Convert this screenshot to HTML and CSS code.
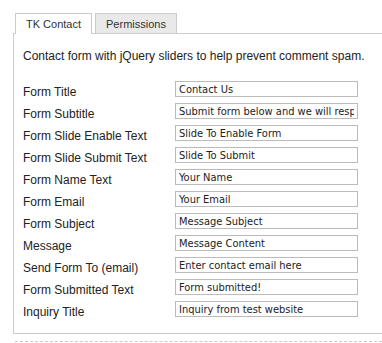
FILE: index.html
```html
<!DOCTYPE html>
<html>
  <head>
    <title>TK Contact</title>
    <link rel="stylesheet" href="styles.css">
  </head>
  <body>
    <div class="tabs">
      <div class="tab active">TK Contact</div>
      <div class="tab">Permissions</div>
    </div>
    <div class="panel">
      <p class="intro">Contact form with jQuery sliders to help prevent comment spam.</p>
      <div class="fields">
        <div class="row">
          <label for="title">Form Title</label>
          <input type="text" id="title" value="Contact Us">
        </div>
        <div class="row">
          <label for="subtitle">Form Subtitle</label>
          <input type="text" id="subtitle" value="Submit form below and we will respond shortly">
        </div>
        <div class="row">
          <label for="enable">Form Slide Enable Text</label>
          <input type="text" id="enable" value="Slide To Enable Form">
        </div>
        <div class="row">
          <label for="submit">Form Slide Submit Text</label>
          <input type="text" id="submit" value="Slide To Submit">
        </div>
        <div class="row">
          <label for="name">Form Name Text</label>
          <input type="text" id="name" value="Your Name">
        </div>
        <div class="row">
          <label for="email">Form Email</label>
          <input type="text" id="email" value="Your Email">
        </div>
        <div class="row">
          <label for="subject">Form Subject</label>
          <input type="text" id="subject" value="Message Subject">
        </div>
        <div class="row">
          <label for="message">Message</label>
          <input type="text" id="message" value="Message Content">
        </div>
        <div class="row">
          <label for="sendto">Send Form To (email)</label>
          <input type="text" id="sendto" value="Enter contact email here">
        </div>
        <div class="row">
          <label for="done">Form Submitted Text</label>
          <input type="text" id="done" value="Form submitted!">
        </div>
        <div class="row">
          <label for="inquiry">Inquiry Title</label>
          <input type="text" id="inquiry" value="Inquiry from test website">
        </div>
      </div>
    </div>
    <div class="next"></div>
  </body>
</html>
```

FILE: styles.css
```css
body {
  margin: 0;
  padding: 13px 0 0 13px;
  font-family: "Liberation Sans", Arial, sans-serif;
  font-size: 12px;
  color: #222;
  background: #fff;
  overflow: hidden;
}

.tabs {
  display: flex;
  gap: 3px;
  margin-left: 2px;
}

.tab {
  border: 1px solid #ccc;
  border-bottom: none;
  background: #e9e9e9;
  color: #333;
  font-size: 11px;
  padding: 3px 10px 0;
  height: 16px;
  line-height: 15px;
}

.tab.active {
  background: #fff;
  height: 17px;
  margin-bottom: -1px;
  position: relative;
}

.panel {
  border: 1px solid #ccc;
  border-right: none;
  padding: 15px 0 10px 9px;
}

.intro {
  margin: 0 0 17px;
  line-height: 15px;
}

.row {
  display: flex;
  align-items: flex-start;
  height: 22px;
}

.row label {
  width: 152px;
  padding-top: 4px;
  line-height: 15px;
}

.row input {
  width: 183px;
  height: 16px;
  box-sizing: border-box;
  border: 1px solid #bbb;
  padding: 0 3px;
  margin: 0;
  font-family: "DejaVu Sans Condensed", "DejaVu Sans", Verdana, sans-serif;
  font-size: 11px;
  color: #222;
  outline: none;
}

.next {
  margin: 7px 0 0 2px;
  border-top: 1px dashed #ccc;
  height: 10px;
}
```
